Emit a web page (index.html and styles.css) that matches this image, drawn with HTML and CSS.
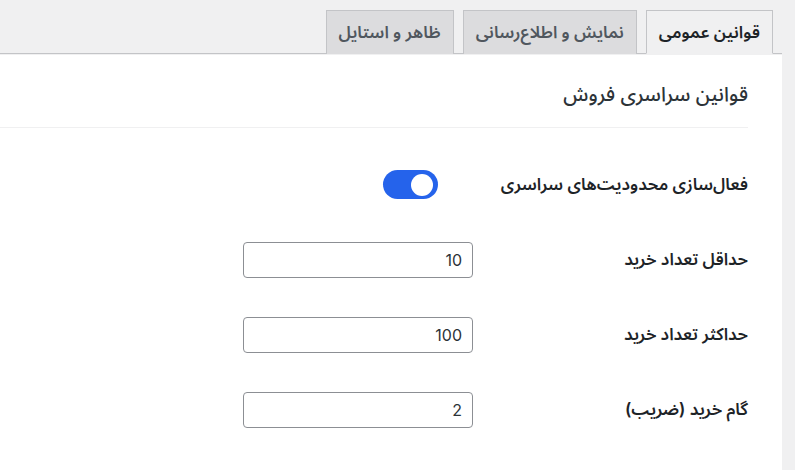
FILE: index.html
```html
<!DOCTYPE html>
<html lang="fa" dir="rtl">
<head>
    <meta charset="UTF-8">
    <meta name="viewport" content="width=device-width, initial-scale=1.0">
    <title>تنظیمات فروش</title>
    <link rel="stylesheet" href="styles.css">
</head>
<body>
    <div class="wrap">
        <nav class="nav-tabs">
            <a href="#" class="nav-tab nav-tab-active">قوانین عمومی</a>
            <a href="#" class="nav-tab">نمایش و اطلاع‌رسانی</a>
            <a href="#" class="nav-tab">ظاهر و استایل</a>
        </nav>

        <div class="card">
            <h2 class="card-title">قوانین سراسری فروش</h2>

            <div class="form-row">
                <label class="form-label" for="limits">فعال‌سازی محدودیت‌های سراسری</label>
                <label class="switch">
                    <input type="checkbox" id="limits" checked>
                    <span class="slider"></span>
                </label>
            </div>

            <div class="form-row">
                <label class="form-label" for="min-qty">حداقل تعداد خرید</label>
                <input class="form-input" type="number" id="min-qty" value="10">
            </div>

            <div class="form-row">
                <label class="form-label" for="max-qty">حداکثر تعداد خرید</label>
                <input class="form-input" type="number" id="max-qty" value="100">
            </div>

            <div class="form-row">
                <label class="form-label" for="step">گام خرید (ضریب)</label>
                <input class="form-input" type="number" id="step" value="2">
            </div>
        </div>
    </div>
</body>
</html>
```

FILE: styles.css
```css
body {
    margin: 0;
    background-color: #f0f0f1;
    color: #1d2327;
    font-family: Inter, "Noto Sans Arabic", "DejaVu Sans", sans-serif;
    overflow: hidden;
}

.wrap {
    margin: 0 13px 0 -12px;
}

/* tabs */
.nav-tabs {
    display: flex;
    gap: 9px;
    padding: 10px 9px 0 0;
    border-bottom: 1px solid #c3c4c7;
}

.nav-tab {
    display: block;
    padding: 7px 12px;
    line-height: 28px;
    font-size: 17px;
    font-weight: 600;
    color: #50575e;
    text-decoration: none;
    background-color: #dcdcde;
    border: 1px solid #c3c4c7;
    border-bottom: none;
    margin-bottom: -1px;
}

.nav-tab-active {
    background-color: #f0f0f1;
    color: #1d2327;
    border-bottom: 1px solid #f0f0f1;
}

/* card */
.card {
    box-sizing: border-box;
    margin-top: 1px;
    background-color: #fff;
    border-top-left-radius: 10px;
    padding: 20px 34px 0 0;
    height: 415px;
}

.card-title {
    margin: 0 0 19px 0;
    padding-bottom: 14px;
    font-size: 20px;
    font-weight: 500;
    line-height: 38px;
    color: #2c3338;
    border-bottom: 1px solid #f0f0f1;
}

/* form rows */
.form-row {
    display: flex;
    align-items: center;
    height: 75px;
}

.form-label {
    width: 275px;
    font-size: 17px;
    font-weight: 600;
    color: #1d2327;
}

.form-input {
    box-sizing: border-box;
    width: 230px;
    height: 36px;
    padding: 0 10px;
    border: 1px solid #8c8f94;
    border-radius: 4px;
    font-family: Inter, sans-serif;
    font-size: 16px;
    color: #2c3338;
    text-align: right;
    direction: ltr;
    -moz-appearance: textfield;
}

.form-input::-webkit-inner-spin-button {
    -webkit-appearance: none;
}

/* toggle */
.switch {
    position: relative;
    display: block;
    width: 55px;
    height: 29px;
    margin-right: 35px;
}

.switch input {
    opacity: 0;
    width: 0;
    height: 0;
}

.slider {
    position: absolute;
    inset: 0;
    background-color: #2563eb;
    border-radius: 15px;
}

.slider::before {
    content: "";
    position: absolute;
    top: 3.5px;
    right: 5px;
    width: 22px;
    height: 22px;
    background-color: #fff;
    border-radius: 50%;
}
```
